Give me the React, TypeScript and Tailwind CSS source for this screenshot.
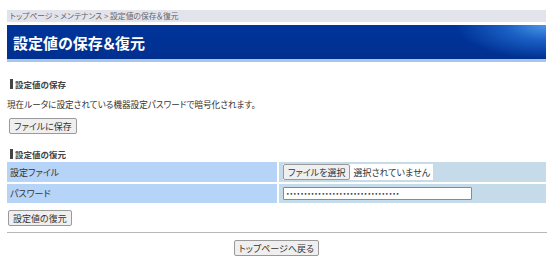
import React from 'react';

const font = "font-['Noto_Sans_CJK_JP','Noto_Sans',sans-serif] [font-feature-settings:'palt']";

const Btn: React.FC<{ children: React.ReactNode; className?: string }> = ({ children, className = '' }) => (
  <button
    className={`h-[16px] px-[4px] whitespace-nowrap border border-[#9a9a9a] rounded-[2px] bg-[#efefef] text-[9px] leading-none text-[#333] ${className}`}
  >
    {children}
  </button>
);

const SectionTitle: React.FC<{ title: string }> = ({ title }) => (
  <div className="flex items-center h-[12px] pl-[3px]">
    <span className="w-[3px] h-[10px] bg-[#444]" />
    <span className="ml-[2px] text-[8.5px] font-bold text-[#444] leading-none">{title}</span>
  </div>
);

export default function App() {
  return (
    <div className={`w-[557px] h-[261px] bg-white px-[7px] pt-[10px] ${font}`}>
      {/* breadcrumb */}
      <div className="h-[12px] w-[539px] bg-[#e3e3ec] pl-[3px] text-[7.8px] leading-[12px] text-[#666] whitespace-nowrap">
        トップページ &gt; メンテナンス &gt; 設定値の保存＆復元
      </div>

      {/* title banner */}
      <div className="mt-[3px] w-[539px] h-[37px] border-b-[3px] border-[#a9c6e8] bg-[radial-gradient(ellipse_90px_34px_at_100%_0%,#4a98e6,#1a5fc4_45%,transparent_100%),linear-gradient(#00349a,#003090)] flex items-center pl-[6px]">
        <h1 className="text-white font-bold text-[15px] leading-none">設定値の保存＆復元</h1>
      </div>

      <div className="mt-[16px]">
        <SectionTitle title="設定値の保存" />
      </div>
      <p className="mt-[7px] text-[8.6px] leading-[14px] text-[#333] whitespace-nowrap">
        現在ルータに設定されている機器設定パスワードで暗号化されます。
      </p>
      <div className="mt-[7px] flex">
        <Btn className="ml-[2px]">ファイルに保存</Btn>
      </div>

      <div className="mt-[14px]">
        <SectionTitle title="設定値の復元" />
      </div>
      <table className="w-[539px] border-separate border-spacing-y-[2px] border-spacing-x-0 text-[9px] text-[#333] leading-none">
        <tbody>
          <tr>
            <td className="w-[272px] h-[20px] p-0 bg-[#b6d4f8] pl-[3px] border-r-[2px] border-white">設定ファイル</td>
            <td className="h-[20px] p-0 bg-[#c6dbe9] pl-[4px]">
              <div className="flex items-center bg-white h-[16px] w-[150px]">
                <Btn>ファイルを選択</Btn>
                <span className="ml-[3px] whitespace-nowrap">選択されていません</span>
              </div>
            </td>
          </tr>
          <tr>
            <td className="h-[19px] p-0 bg-[#b6d4f8] pl-[3px] border-r-[2px] border-white">パスワード</td>
            <td className="h-[19px] p-0 bg-[#c6dbe9] pl-[4px]">
              <div className="w-[189px] h-[13px] bg-white border border-[#8a8a8a] rounded-[1px] flex items-center pl-[2px] text-[6px] text-[#333] overflow-hidden whitespace-nowrap [font-family:'DejaVu_Sans',sans-serif]">
                ••••••••••••••••••••••••••••••••
              </div>
            </td>
          </tr>
        </tbody>
      </table>
      <div className="mt-[5px] flex">
        <Btn className="ml-[1px]">設定値の復元</Btn>
      </div>

      <div className="mt-[6px] w-[540px] border-t border-[#b8b8b8]" />

      <div className="mt-[7px] w-[539px] flex justify-center">
        <Btn>トップページへ戻る</Btn>
      </div>
    </div>
  );
}
